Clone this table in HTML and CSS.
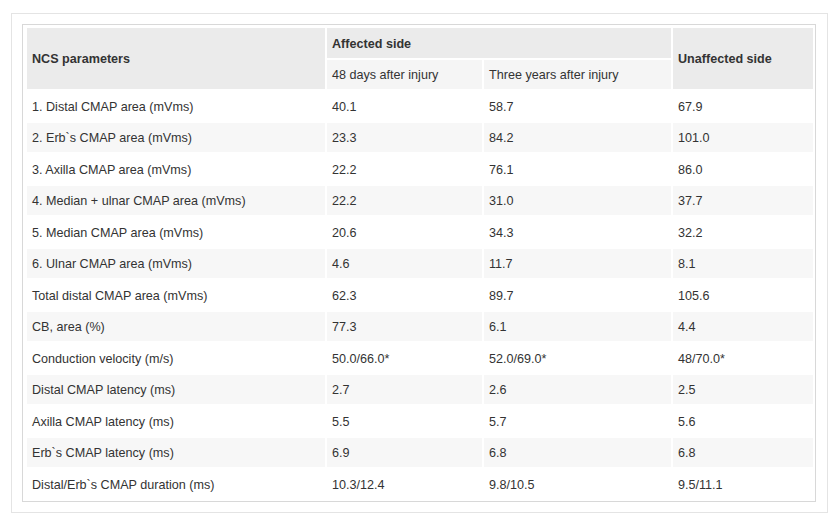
FILE: index.html
```html
<!DOCTYPE html>
<html>
<head>
<meta charset="utf-8">
<link rel="stylesheet" href="styles.css">
</head>
<body>
<div class="frame">
  <div class="table-wrap">
    <table class="data">
      <colgroup>
        <col class="c1"><col class="c2"><col class="c3"><col class="c4">
      </colgroup>
      <thead>
        <tr>
          <th rowspan="2" class="head">NCS parameters</th>
          <th colspan="2" class="head">Affected side</th>
          <th rowspan="2" class="head">Unaffected side</th>
        </tr>
        <tr>
          <td class="sub">48 days after injury</td>
          <td class="sub">Three years after injury</td>
        </tr>
      </thead>
      <tbody>
        <tr><td>1. Distal CMAP area (mVms)</td><td>40.1</td><td>58.7</td><td>67.9</td></tr>
        <tr><td>2. Erb`s CMAP area (mVms)</td><td>23.3</td><td>84.2</td><td>101.0</td></tr>
        <tr><td>3. Axilla CMAP area (mVms)</td><td>22.2</td><td>76.1</td><td>86.0</td></tr>
        <tr><td>4. Median + ulnar CMAP area (mVms)</td><td>22.2</td><td>31.0</td><td>37.7</td></tr>
        <tr><td>5. Median CMAP area (mVms)</td><td>20.6</td><td>34.3</td><td>32.2</td></tr>
        <tr><td>6. Ulnar CMAP area (mVms)</td><td>4.6</td><td>11.7</td><td>8.1</td></tr>
        <tr><td>Total distal CMAP area (mVms)</td><td>62.3</td><td>89.7</td><td>105.6</td></tr>
        <tr><td>CB, area (%)</td><td>77.3</td><td>6.1</td><td>4.4</td></tr>
        <tr><td>Conduction velocity (m/s)</td><td>50.0/66.0*</td><td>52.0/69.0*</td><td>48/70.0*</td></tr>
        <tr><td>Distal CMAP latency (ms)</td><td>2.7</td><td>2.6</td><td>2.5</td></tr>
        <tr><td>Axilla CMAP latency (ms)</td><td>5.5</td><td>5.7</td><td>5.6</td></tr>
        <tr><td>Erb`s CMAP latency (ms)</td><td>6.9</td><td>6.8</td><td>6.8</td></tr>
        <tr><td>Distal/Erb`s CMAP duration (ms)</td><td>10.3/12.4</td><td>9.8/10.5</td><td>9.5/11.1</td></tr>
      </tbody>
    </table>
  </div>
</div>
</body>
</html>
```

FILE: styles.css
```css
html, body {
  background: #ffffff;
}
body {
  margin: 13px 0 0 11px;
  font-family: "Liberation Sans", Arial, sans-serif;
  font-size: 12.6px;
  color: #333333;
}
.frame {
  box-sizing: border-box;
  width: 817px;
  border: 1px solid #e4e4e4;
  padding: 10px 11px 10px 10px;
}
.table-wrap {
  border: 1px solid #d8d8d8;
  padding: 1px 0 0 2px;
}
.data {
  border-collapse: separate;
  border-spacing: 2px;
  table-layout: fixed;
  width: 790px;
}
.c1 { width: 298px; }
.c2 { width: 155px; }
.c3 { width: 187px; }
.c4 { width: 140px; }
.data th,
.data td {
  padding: 8.5px 5px 5.5px;
  line-height: 15.5px;
  text-align: left;
  vertical-align: middle;
}
.data th.head {
  background: #ebebeb;
  font-weight: bold;
}
.data td.sub {
  background: #f5f5f5;
}
.data tbody tr:nth-child(even) td {
  background: #f7f7f7;
}
```
